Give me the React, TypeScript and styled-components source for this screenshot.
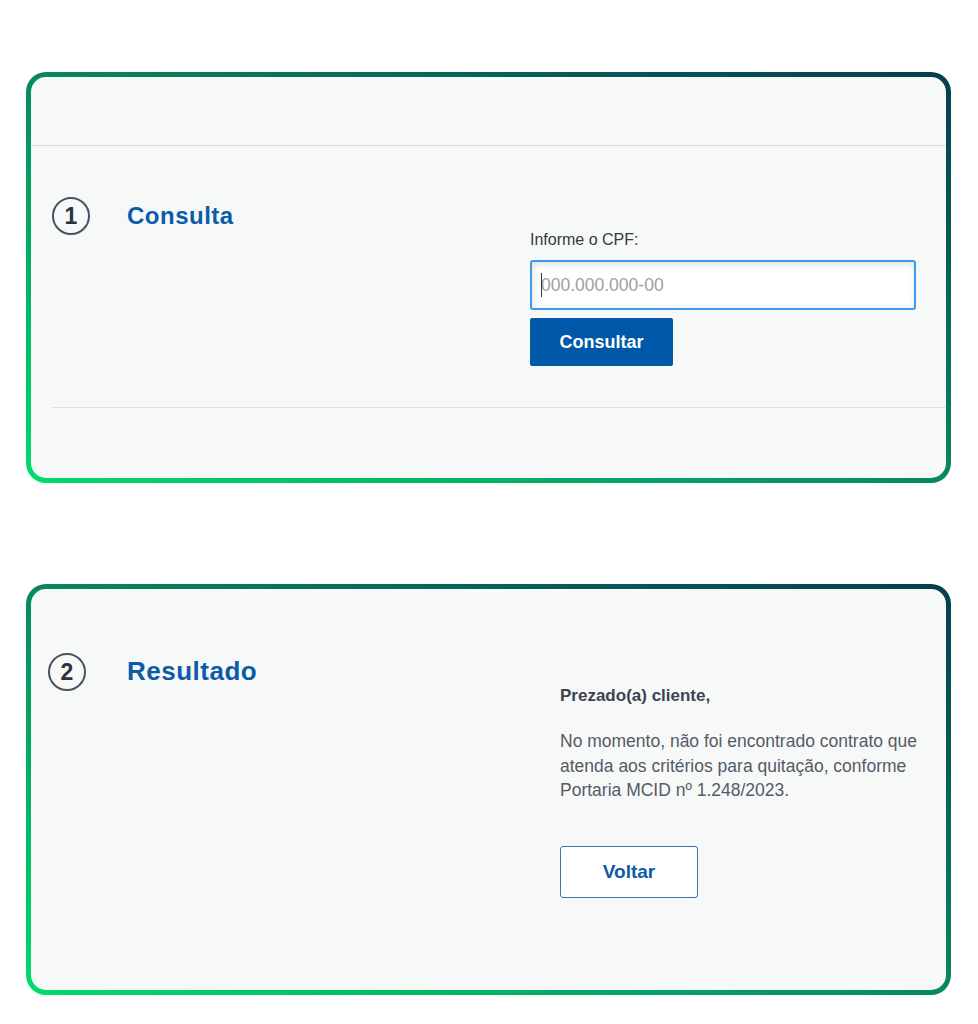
import React from "react";
import styled, { createGlobalStyle } from "styled-components";

const GlobalStyle = createGlobalStyle`
  html, body {
    margin: 0;
    padding: 0;
    background: #ffffff;
  }
  body {
    font-family: "Liberation Sans", Arial, sans-serif;
    color: #333a45;
  }
  * {
    box-sizing: border-box;
  }
`;

const Page = styled.main`
  display: flex;
  flex-direction: column;
  gap: 101px;
  padding: 72px 27px 29px 26px;
`;

const Card = styled.section`
  height: 411px;
  border: 5px solid transparent;
  border-radius: 20px;
  background:
    linear-gradient(#f7f9f9, #f7f9f9) padding-box,
    linear-gradient(to top right, #00dc6c 0%, #08885f 50%, #053d4e 100%) border-box;
  display: flex;
  flex-direction: column;
`;

const TopBar = styled.div`
  height: 69px;
  border-bottom: 1px solid #d5dae4;
`;

const Section = styled.div<{ $indent: number }>`
  padding-left: ${(p) => p.$indent}px;
`;

const StepRow = styled.div<{ $left: number; $right: number; $top: number; $bottom: number }>`
  display: grid;
  grid-template-columns: ${(p) => p.$left}px 1fr;
  padding: ${(p) => p.$top}px ${(p) => p.$right}px ${(p) => p.$bottom}px 0;
  align-items: start;
`;

const Divider = styled.hr`
  margin: 0;
  border: 0;
  border-top: 1px solid #dfe2e6;
`;

const StepHeader = styled.div<{ $gap: number }>`
  display: flex;
  align-items: center;
  gap: ${(p) => p.$gap}px;
`;

const StepNumber = styled.span`
  width: 38px;
  height: 38px;
  border: 2px solid #4a5163;
  border-radius: 50%;
  display: flex;
  align-items: center;
  justify-content: center;
  font-size: 23px;
  font-weight: 700;
  color: #2a3242;
  line-height: 1;
`;

const StepTitle = styled.h2<{ $size: number }>`
  margin: 0;
  font-size: ${(p) => p.$size}px;
  font-weight: 700;
  letter-spacing: 0.5px;
  color: #0c5ba8;
  line-height: 1.2;
`;

const Form = styled.form`
  display: flex;
  flex-direction: column;
  align-items: flex-start;
  margin-top: 34px;
`;

const Label = styled.label`
  font-size: 16px;
  line-height: 18px;
  color: #333a45;
  margin-bottom: 11px;
`;

const InputWrap = styled.div`
  position: relative;
  width: 100%;
`;

const Input = styled.input`
  display: block;
  width: 100%;
  height: 50px;
  padding: 0 9px;
  border: 2px solid #3b9cee;
  border-radius: 3px;
  background: #ffffff;
  box-shadow: inset 1px 2px 7px rgba(0, 0, 0, 0.13);
  font-family: "Liberation Sans", Arial, sans-serif;
  font-size: 17.5px;
  color: #333a45;
  outline: none;

  &::placeholder {
    color: #9b9fa5;
  }
`;

const Caret = styled.span`
  position: absolute;
  left: 11px;
  top: 13px;
  width: 1px;
  height: 24px;
  background: #333a45;
`;

const PrimaryButton = styled.button`
  margin-top: 8px;
  width: 143px;
  height: 48px;
  border: 0;
  border-radius: 2px;
  background: #0058a8;
  color: #ffffff;
  font-family: "Liberation Sans", Arial, sans-serif;
  font-size: 18px;
  font-weight: 700;
  cursor: pointer;
`;

const Result = styled.div`
  margin-top: 33px;
`;

const Greeting = styled.p`
  margin: 0;
  font-size: 17px;
  line-height: 20px;
  font-weight: 700;
  color: #3d4350;
`;

const Message = styled.p`
  margin: 23px 0 0;
  font-size: 17.5px;
  line-height: 24.5px;
  color: #545b66;
`;

const SecondaryButton = styled.button`
  margin-top: 43px;
  width: 138px;
  height: 52px;
  border: 1px solid #3b6fae;
  border-radius: 3px;
  background: #ffffff;
  color: #0c5ba8;
  font-family: "Liberation Sans", Arial, sans-serif;
  font-size: 19px;
  font-weight: 700;
  cursor: pointer;
`;

export default function App() {
  return (
    <>
      <GlobalStyle />
      <Page>
        <Card>
          <TopBar />
          <Section $indent={21}>
            <StepRow $left={478} $right={30} $top={51} $bottom={41}>
              <StepHeader $gap={37}>
                <StepNumber>1</StepNumber>
                <StepTitle $size={24}>Consulta</StepTitle>
              </StepHeader>
              <Form onSubmit={(e) => e.preventDefault()}>
                <Label htmlFor="cpf">Informe o CPF:</Label>
                <InputWrap>
                  <Input id="cpf" placeholder="000.000.000-00" />
                  <Caret />
                </InputWrap>
                <PrimaryButton type="submit">Consultar</PrimaryButton>
              </Form>
            </StepRow>
            <Divider />
          </Section>
        </Card>

        <Card>
          <Section $indent={17}>
            <StepRow $left={512} $right={16} $top={64} $bottom={0}>
              <StepHeader $gap={41}>
                <StepNumber>2</StepNumber>
                <StepTitle $size={26}>Resultado</StepTitle>
              </StepHeader>
              <Result>
                <Greeting>Prezado(a) cliente,</Greeting>
                <Message>
                  No momento, não foi encontrado contrato que atenda aos critérios para
                  quitação, conforme Portaria MCID nº 1.248/2023.
                </Message>
                <SecondaryButton type="button">Voltar</SecondaryButton>
              </Result>
            </StepRow>
          </Section>
        </Card>
      </Page>
    </>
  );
}
